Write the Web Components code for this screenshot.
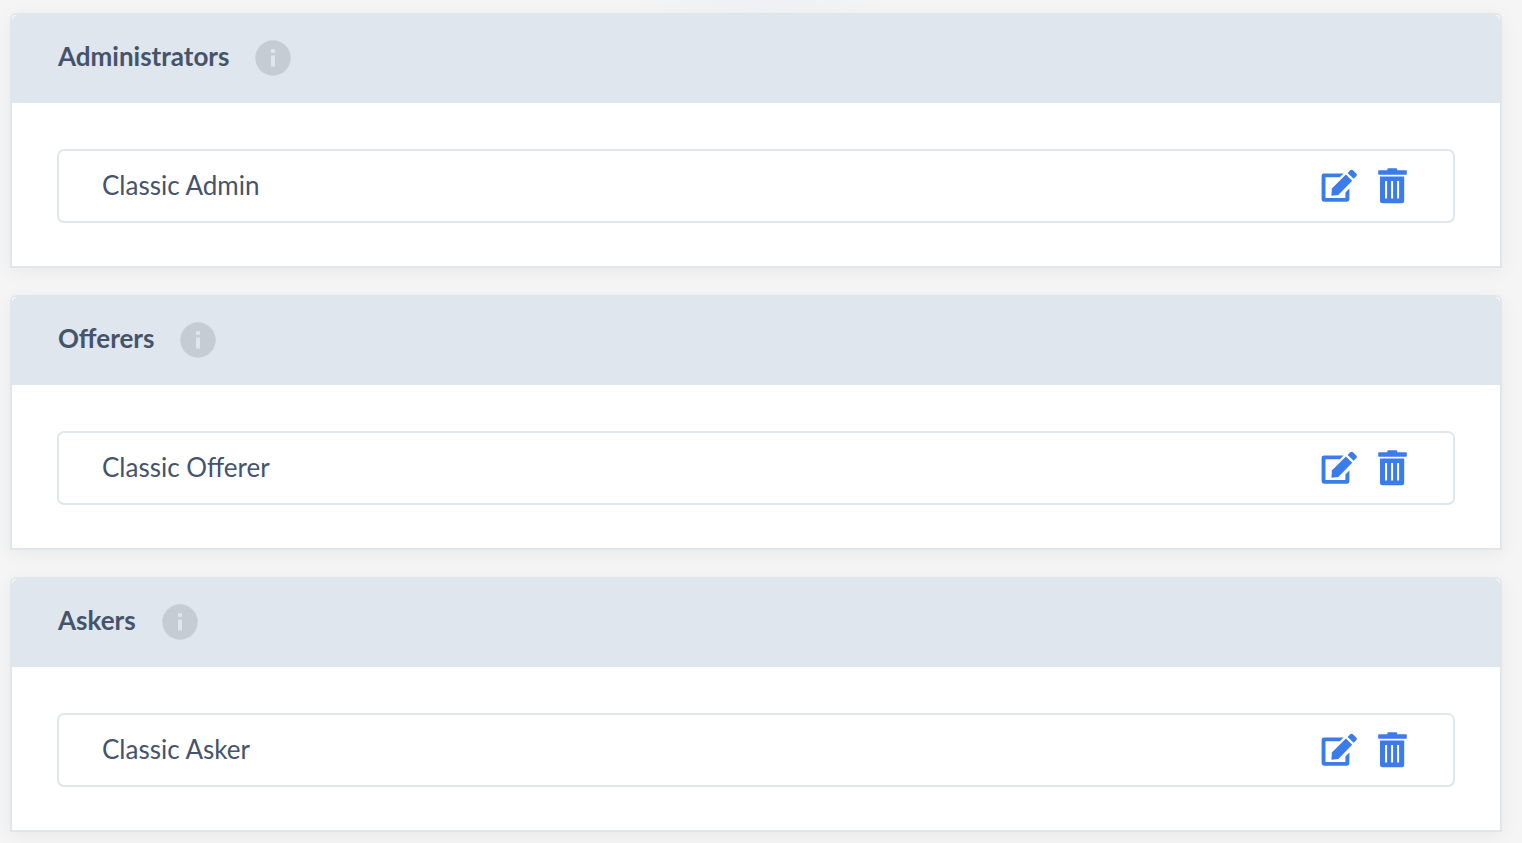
<!DOCTYPE html>
<html lang="en">
<head>
<meta charset="utf-8">
<meta name="viewport" content="width=device-width, initial-scale=1">
<title>Roles</title>
<style>
  body {
    margin: 0;
    padding: 13px 20px 11px 10px;
    background: radial-gradient(ellipse 140px 16px at 50% 0, #eef0f5, transparent) no-repeat #f5f5f5;
    color: #45536b;
    font-family: Lato, "Liberation Sans", sans-serif;
    font-size: 26px;
    line-height: 32px;
  }
</style>
</head>
<body>

<role-list>
  <role-group heading="Administrators"><role-row>Classic Admin</role-row></role-group>
  <role-group heading="Offerers"><role-row>Classic Offerer</role-row></role-group>
  <role-group heading="Askers"><role-row>Classic Asker</role-row></role-group>
</role-list>

<script>
class RoleList extends HTMLElement {
  constructor() {
    super();
    this.attachShadow({mode: 'open'});

    this.shadowRoot.innerHTML = `
      <style>
        :host {
          display: grid;
          gap: 27px;
        }
      </style>
      <slot></slot>
    `;
  }
}

class InfoButton extends HTMLElement {
  constructor() {
    super();
    this.attachShadow({mode: 'open'});

    this.shadowRoot.innerHTML = `
      <style>
        :host {
          display: block;
        }
        button {
          display: block;
          padding: 0;
          border: 0;
          background: none;
          cursor: pointer;
        }
        svg {
          display: block;
        }
      </style>
      <button type="button" aria-label="Info">
        <svg width="36" height="36" viewBox="0 0 36 36">
          <circle cx="18" cy="18" r="17.7" fill="#c5ccd4"/>
          <path d="M16 9.3h4v3.4h-4zM16 15.4h4v11h-4z" fill="#dfe6ed"/>
        </svg>
      </button>
    `;
  }
}

class RoleGroup extends HTMLElement {
  constructor() {
    super();
    this.attachShadow({mode: 'open'});

    this.shadowRoot.innerHTML = `
      <style>
        :host {
          display: block;
          border: 2px solid #e0e7ec;
          border-radius: 6px 6px 0 0;
          background: #fff;
          box-shadow: 0 4px 20px rgba(0, 0, 0, 0.05);
        }
        header {
          display: flex;
          align-items: center;
          gap: 26px;
          padding: 25px 46px 27px;
          border-radius: 6px 6px 0 0;
          background: #dfe6ed;
        }
        h2 {
          margin: 0;
          padding-bottom: 4px;
          font-size: inherit;
          font-weight: 700;
        }
        .content {
          padding: 46px 45px 43px;
        }
      </style>
      <header>
        <h2></h2>
        <info-button></info-button>
      </header>
      <div class="content"><slot></slot></div>
    `;
  }

  connectedCallback() {
    this.shadowRoot.querySelector('h2').textContent = this.getAttribute('heading');
  }
}

class RoleRow extends HTMLElement {
  constructor() {
    super();
    this.attachShadow({mode: 'open'});

    this.shadowRoot.innerHTML = `
      <style>
        :host {
          display: flex;
          align-items: center;
          justify-content: space-between;
          padding: 17px 46px 17px 43px;
          border: 2px solid #e0e7ec;
          border-radius: 7px;
        }
        span {
          padding-bottom: 2px;
        }
        .actions {
          display: flex;
          gap: 21px;
        }
        button {
          padding: 0;
          border: 0;
          background: none;
          color: #3b7bea;
          cursor: pointer;
        }
        svg {
          display: block;
          fill: currentColor;
        }
      </style>
      <span><slot></slot></span>
      <div class="actions">
        <button type="button" aria-label="Edit">
          <svg width="36" height="36" viewBox="0 0 36 36">
            <path d="M22.6 5.5H3Q.6 5.5.6 7.9v23.4q0 2.4 2.4 2.4h23q2.4 0 2.4-2.4V20.4l-4 4V30H4.5V9.3h14.3z"/>
            <path d="M10.4 27.8l.5-7.2L24.9 6.6l6.3 6.1L17.3 27z"/>
            <path d="M26.6 5l2.6-2.7q1.4-1.3 2.8 0l3.2 3.1q1.4 1.4 0 2.8l-2.6 2.6z"/>
          </svg>
        </button>
        <button type="button" aria-label="Delete">
          <svg width="29" height="36" viewBox="0 0 29 36">
            <path d="M1 2.3h8.3V1.6Q9.3.2 10.7.2h7.2q1.4 0 1.4 1.4v.7H28q.8 0 .8.8v2.8q0 .8-.8.8H1q-.8 0-.8-.8V3.1q0-.8.8-.8z"/>
            <path fill-rule="evenodd" d="M2 8.4h24.2v24.4q0 2.5-2.5 2.5H4.5Q2 35.3 2 32.8zM7.1 13v17.6h2V13zM13.1 13v17.6h2V13zM19.1 13v17.6h2V13z"/>
          </svg>
        </button>
      </div>
    `;
  }
}

customElements.define('role-list', RoleList);
customElements.define('info-button', InfoButton);
customElements.define('role-group', RoleGroup);
customElements.define('role-row', RoleRow);
</script>
</body>
</html>
